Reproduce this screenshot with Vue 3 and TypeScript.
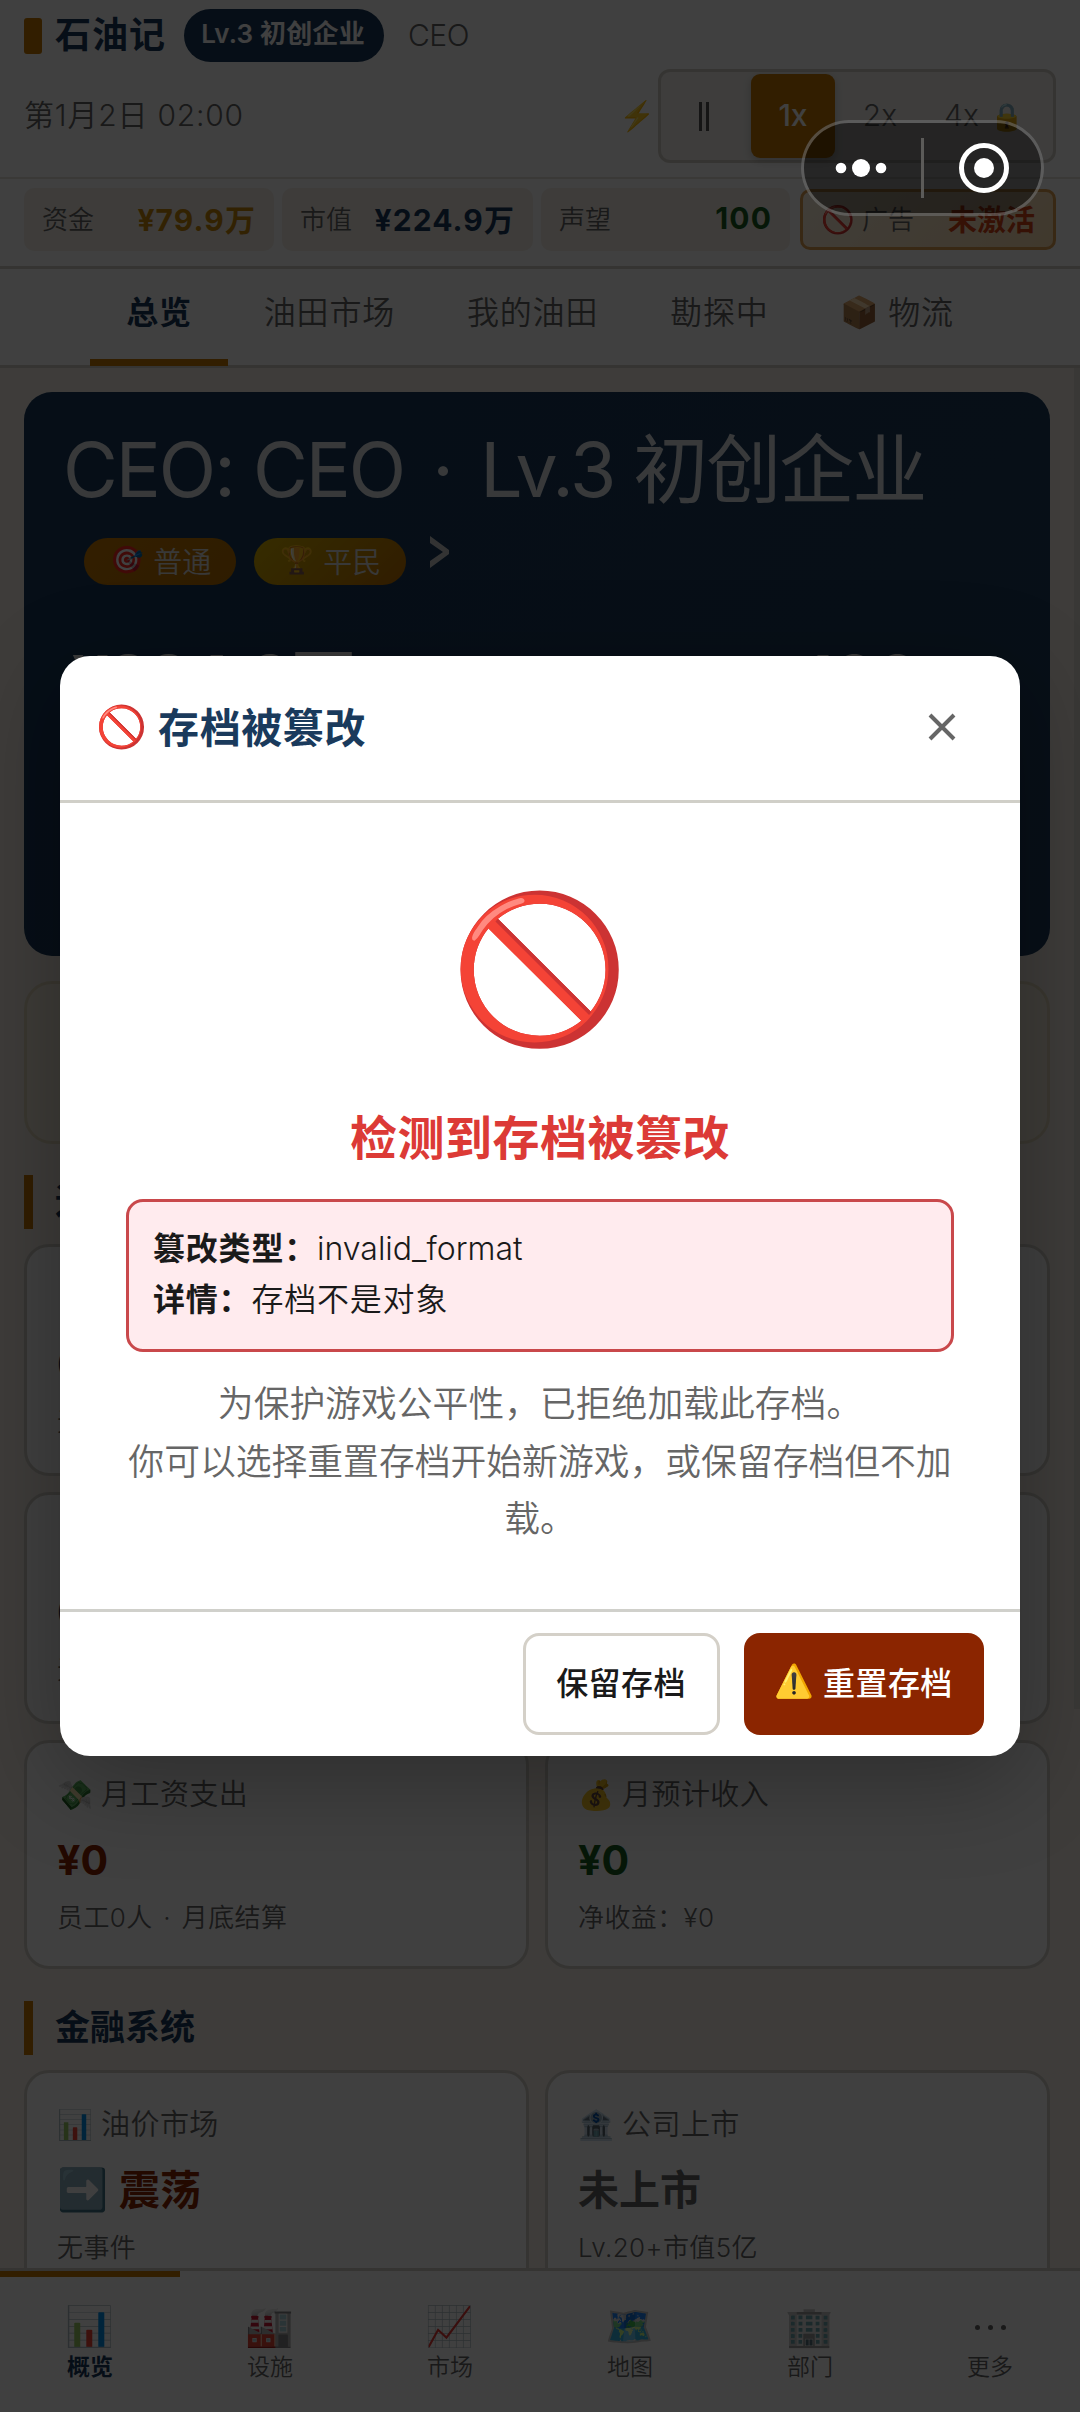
<script setup lang="ts">
interface Stat { label: string; value: string; tone: string; width: number }
interface Card { icon?: string; label?: string; mark?: string; value?: string; note?: string; tone?: string }

const stats: Stat[] = [
  { label: '资金', value: '¥79.9万', tone: 'gold', width: 250 },
  { label: '市值', value: '¥224.9万', tone: 'navy', width: 251 },
  { label: '声望', value: '100', tone: 'green', width: 249 },
]
const tabs: string[] = ['总览', '油田市场', '我的油田', '勘探中']
const operations: Card[] = [
  { value: '0', note: '无', tone: 'navy' },
  {},
  { value: '0', note: '无', tone: 'navy' },
  {},
  { icon: '💸', label: '月工资支出', value: '¥0', note: '员工0人 · 月底结算', tone: 'rust' },
  { icon: '💰', label: '月预计收入', value: '¥0', note: '净收益：¥0', tone: 'green' },
]
const finance: Card[] = [
  { icon: '📊', label: '油价市场', mark: '➡️', value: '震荡', note: '无事件', tone: 'rust' },
  { icon: '🏦', label: '公司上市', value: '未上市', note: 'Lv.20+市值5亿', tone: 'grey' },
]
const nav = [
  { icon: '📊', label: '概览' },
  { icon: '🏭', label: '设施' },
  { icon: '📈', label: '市场' },
  { icon: '🗺️', label: '地图' },
  { icon: '🏢', label: '部门' },
  { icon: '', label: '更多' },
]
</script>

<template>
  <div class="screen">
    <header class="head">
      <div class="brand">
        <i class="brand-bar"></i>
        <b class="brand-name">石油记</b>
        <span class="level">Lv.3 初创企业</span>
        <span class="role">CEO</span>
      </div>
      <div class="clock">
        <span class="date">第1月2日 02:00</span>
        <span class="emo bolt">⚡</span>
        <div class="speed">
          <span class="sp"><i class="pause"></i></span>
          <span class="sp on">1x</span>
          <span class="sp">2x</span>
          <span class="sp wide">4x <span class="emo lock">🔒</span></span>
        </div>
      </div>
    </header>
    <div class="stats">
      <div v-for="s in stats" :key="s.label" class="stat" :style="{ width: s.width + 'px' }">
        <span>{{ s.label }}</span><b :class="s.tone">{{ s.value }}</b>
      </div>
      <div class="stat ad"><span><span class="emo">🚫</span> 广告</span><b>未激活</b></div>
    </div>
    <nav class="tabs">
      <span v-for="(t, i) in tabs" :key="t" :class="['tab', { active: i === 0 }]">{{ t }}</span>
      <span class="tab"><span class="emo box">📦</span>物流</span>
    </nav>

    <main class="body">
      <section class="hero">
        <div class="hero-title">CEO: CEO<span class="dot">·</span>Lv.3 初创企业</div>
        <div class="hero-tags">
          <span class="tag t1"><span class="emo">🎯</span>普通</span>
          <span class="tag t2"><span class="emo">🏆</span>平民</span>
          <svg class="chev" viewBox="0 0 19 32"><path d="M0 0L19 14V18L0 32V25L13 16L0 7Z" /></svg>
        </div>
        <div class="hero-nums"><b>¥224.9万</b><b class="rep">100</b></div>
      </section>
      <section class="notice"></section>
      <h2 class="section">运营</h2>
      <div class="grid ops">
        <article v-for="(c, i) in operations" :key="i" class="card">
          <div class="c-label"><span v-if="c.icon" class="emo">{{ c.icon }}</span>{{ c.label }}</div>
          <div :class="['c-value', c.tone]">{{ c.value }}</div>
          <div class="c-note">{{ c.note }}</div>
        </article>
      </div>
      <h2 class="section second">金融系统</h2>
      <div class="grid">
        <article v-for="c in finance" :key="c.label" class="card">
          <div class="c-label"><span class="emo">{{ c.icon }}</span>{{ c.label }}</div>
          <div :class="['c-value', c.tone]"><span v-if="c.mark" class="emo mark">{{ c.mark }}</span>{{ c.value }}</div>
          <div class="c-note">{{ c.note }}</div>
        </article>
      </div>
      <i class="thumb"></i>
    </main>

    <footer class="nav">
      <div v-for="(n, i) in nav" :key="n.label" :class="['nav-item', { active: i === 0 }]">
        <span v-if="n.icon" class="emo nav-icon">{{ n.icon }}</span>
        <span v-else class="nav-icon more"><i></i><i></i><i></i></span>
        <span>{{ n.label }}</span>
      </div>
    </footer>

    <div class="overlay">
      <div class="modal">
        <div class="m-head">
          <span class="emo m-ico">🚫</span>
          <b>存档被篡改</b>
          <svg class="close" viewBox="0 0 28 28"><path d="M2 2L26 26M26 2L2 26" /></svg>
        </div>
        <div class="m-body">
          <div class="emo big">🚫</div>
          <h3>检测到存档被篡改</h3>
          <div class="detail">
            <div><b>篡改类型：</b>invalid_format</div>
            <div class="spaced"><b>详情：</b>存档不是对象</div>
          </div>
          <p>为保护游戏公平性，已拒绝加载此存档。<br />你可以选择重置存档开始新游戏，或保留存档但不加载。</p>
        </div>
        <div class="m-foot">
          <button class="btn keep">保留存档</button>
          <button class="btn reset"><span class="emo">⚠️</span>重置存档</button>
        </div>
      </div>
    </div>

    <div class="capsule">
      <svg viewBox="0 0 243 96">
        <circle cx="40" cy="48" r="5.300" /><circle cx="60" cy="48" r="9" /><circle cx="80" cy="48" r="5.300" />
        <rect x="120" y="18" width="3" height="60" fill="#5c5b59" />
        <circle cx="183" cy="48" r="22.500" fill="none" stroke="#fff" stroke-width="5" />
        <circle cx="183" cy="48" r="10" />
      </svg>
    </div>
  </div>
</template>

<style>
body { background: #fff; }
</style>

<style scoped>
* { box-sizing: border-box; }
.screen {
  position: relative; width: 1080px; height: 2412px; overflow: hidden;
  display: flex; flex-direction: column; background: #fff; color: #666;
  font-family: Inter, "Noto Sans CJK SC", sans-serif; font-weight: 350;
}
.emo { font-family: "Noto Color Emoji", sans-serif; font-weight: 400; letter-spacing: 0; }
b, h2, h3 { font-weight: 700; }
.gold { color: #c8860a; } .navy { color: #1a3a5c; } .green { color: #1b5e20; }
.rust { color: #8b2500; } .grey { color: #666; }

.head { height: 179px; padding: 9px 24px 0; border-bottom: 2px solid #e8e4dc; }
.brand { display: flex; align-items: center; height: 53px; }
.brand-bar { width: 18px; height: 36px; border-radius: 3px; background: #c87a00; margin: 0 13px 0 0; }
.brand-name { font-size: 36px; color: #1a3a5c; letter-spacing: 1px; width: 129px; line-height: 50px; padding-bottom: 2px; }
.level { width: 200px; height: 53px; line-height: 50px; border-radius: 27px; background: #1a3a5c; color: #fff; font-size: 26px; font-weight: 600; text-align: center; padding-right: 2px; letter-spacing: .2px; }
.role { margin-left: 24px; font-size: 30px; letter-spacing: -.5px; padding-bottom: 2px; }
.clock { display: flex; align-items: center; height: 94px; margin-top: 7px; }
.date { font-size: 30px; letter-spacing: .8px; flex: 1; padding-bottom: 6px; }
.bolt { font-size: 29px; margin-right: 3px; }
.speed { width: 398px; height: 94px; border: 3px solid #d4d0c8; border-radius: 12px; background: #f5f3ef; display: flex; padding: 2px; gap: 6px; }
.sp { flex: none; width: 84px; height: 84px; line-height: 82px; text-align: center; font-size: 30px; border-radius: 9px; }
.sp:first-child { width: 82px; display: flex; justify-content: center; align-items: center; }
.sp:nth-child(3) { width: 78px; }
.sp.on { background: #c87a00; color: #fff; font-weight: 500; box-shadow: 0 3px 9px rgba(0, 0, 0, .2); }
.sp.wide { width: 118px; }
.lock { font-size: 27px; margin-left: 3px; }
.pause { width: 10px; height: 29px; border: solid #555; border-width: 0 3px; }

.stats { height: 90px; padding: 9px 24px 0; display: flex; gap: 8px; border-bottom: 3px solid #d4d0c8; }
.stat { flex: none; height: 63px; border-radius: 10px; background: #f5f0e8; display: flex; align-items: center; justify-content: space-between; padding: 0 18px 4px; font-size: 26px; }
.stat b { font-size: 30px; letter-spacing: 1.1px; }
.ad { width: 256px; height: 61px; margin: 1px 0 0 2px; border: 3px solid #e0a050; background: linear-gradient(135deg, #fff3e0, #ffe0b2); }
.ad .emo { font-size: 27px; }
.ad b { color: #d84315; font-size: 29px; letter-spacing: 0; }

.tabs { height: 99px; display: flex; justify-content: center; border-bottom: 3px solid #d4d0c8; }
.tab { padding: 0 36px; font-size: 32px; letter-spacing: .8px; line-height: 88px; height: 97px; display: flex; }
.tab.active { color: #1a3a5c; font-weight: 600; border-bottom: 7px solid #c87a00; }
.box { font-size: 31px; margin-right: 9px; }

.body { position: relative; height: 1900px; overflow: hidden; background: #f5f0e8; padding: 24px 30px 0 24px; }
.hero { height: 564px; border-radius: 28px; background: linear-gradient(135deg, #1a3a5c, #1e3d5f); padding: 30px 42px 0 39px; color: #fff; }
.hero-title { font-size: 75px; line-height: 96px; height: 116px; opacity: .85; font-weight: 400; white-space: nowrap; letter-spacing: -2px; }
.hero-title .dot { display: inline-block; width: 76px; text-align: center; }
.hero-tags { display: flex; padding-left: 21px; gap: 18px; }
.tag { width: 152px; height: 47px; border-radius: 24px; display: flex; align-items: center; justify-content: center; font-size: 29px; color: #ddd; padding: 0 0 3px 2px; }
.tag .emo { font-size: 27px; margin-right: 9px; }
.t1 { background: linear-gradient(135deg, #c87a00, #b87000); }
.t2 { background: linear-gradient(135deg, #d4b000, #c07000); }
.chev { width: 19px; height: 32px; margin: -2px 0 0 6px; fill: #ccc; }
.hero-nums { display: flex; justify-content: space-between; margin-top: 55px; font-size: 64px; line-height: 78px; padding: 0 89px 0 9px; color: #e8e8e8; }
.notice { height: 163px; margin-top: 25px; border: 3px solid #e6dcc0; border-radius: 28px; background: #f7f0df; }
.section { height: 54px; margin: 31px 0 15px; border-left: 9px solid #c87a00; padding-left: 22px; font-size: 35px; line-height: 52px; color: #1a3a5c; }
.second { margin-top: 32px; }
.grid { display: grid; grid-template-columns: 1fr 1fr; gap: 16px; }
.card { height: 232px; border: 3px solid #d4d0c8; border-radius: 25px; background: #fff; padding: 29px 30px 0; }
.ops .card:nth-child(n+5) { height: 229px; }
.c-label { height: 45px; font-size: 29px; line-height: 46px; display: flex; letter-spacing: .4px; }
.c-label .emo { font-size: 29px; margin-right: 8px; }
.c-value { height: 84px; line-height: 86px; font-size: 41px; font-weight: 700; display: flex; }
.mark { margin-right: 11px; }
.c-note { font-size: 26px; line-height: 34px; letter-spacing: .4px; word-spacing: 3px; }
.thumb { position: absolute; right: 0; top: 0; width: 6px; height: 1341px; background: #e4dfd7; }

.nav { height: 144px; border-top: 3px solid #d4d0c8; background: #fff; display: flex; }
.nav-item { width: 180px; padding-top: 33px; display: flex; flex-direction: column; align-items: center; font-size: 23px; line-height: 34px; }
.nav-item.active { padding-top: 27px; border-top: 6px solid #c87a00; color: #1a3a5c; font-weight: 600; }
.nav-icon { height: 46px; font-size: 39px; line-height: 46px; }
.more { display: flex; gap: 8px; align-items: center; }
.more i { width: 5px; height: 5px; border-radius: 50%; background: #666; }

.overlay { position: absolute; inset: 0; background: rgba(0, 0, 0, .75); display: flex; align-items: center; justify-content: center; }
.modal { width: 960px; height: 1100px; border-radius: 30px; background: #fff; box-shadow: 0 24px 96px rgba(0, 0, 0, .3); display: flex; flex-direction: column; }
.m-head { height: 147px; border-bottom: 3px solid #d0cfc8; display: flex; align-items: center; padding: 0 64px 2px 36px; }
.m-ico { font-size: 41px; margin-right: 11px; }
.m-head b { flex: 1; font-size: 41px; color: #1a3a5c; letter-spacing: .6px; padding-bottom: 4px; }
.close { width: 28px; height: 28px; fill: none; stroke: #666; stroke-width: 4; }
.m-body { height: 806px; padding: 87px 66px 0; text-align: center; }
.big { font-size: 144px; line-height: 160px; height: 160px; }
h3 { margin: 60px 0 0; height: 89px; font-size: 47px; letter-spacing: .5px; line-height: 56px; color: #dc3a36; }
.detail { height: 153px; border: 3px solid #c9484b; border-radius: 17px; background: #ffebee; color: #1a1a1a; font-size: 32px; line-height: 51px; padding: 21px 24px; text-align: left; }
.detail b, .spaced { letter-spacing: .8px; }
p { margin: 24px 0 0; font-size: 35.8px; line-height: 57.6px; color: #666; }
.m-foot { height: 147px; border-top: 3px solid #d0d0cb; display: flex; justify-content: flex-end; padding: 21px 36px 0; gap: 24px; }
.btn { height: 102px; border-radius: 16px; font: 500 32px Inter, "Noto Sans CJK SC", sans-serif; display: flex; align-items: center; justify-content: center; padding: 0 1px 7px 0; letter-spacing: .4px; }
.keep { width: 197px; border: 3px solid #d4d0c8; background: #fff; color: #1a1a1a; }
.reset { width: 240px; border: 0; background: #8b2500; color: #fff; }
.reset .emo { font-size: 32px; margin-right: 9px; }

.capsule { position: absolute; left: 801px; top: 120px; width: 243px; height: 96px; border-radius: 48px; background: rgba(0, 0, 0, .4); box-shadow: inset 0 0 0 3px rgba(255, 255, 255, .25); }
.capsule svg { display: block; width: 243px; height: 96px; fill: #fff; }
</style>
